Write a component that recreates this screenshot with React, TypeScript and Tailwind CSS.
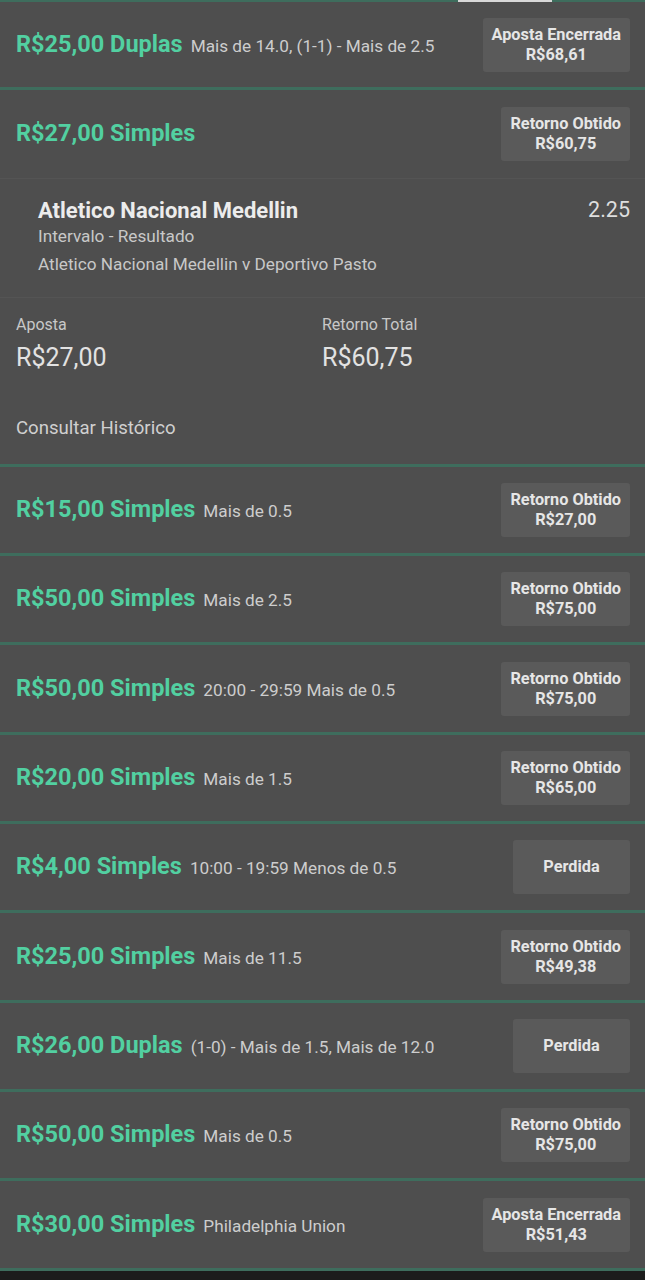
import React from "react";

type Row = { stake: string; type: string; desc?: string; label: string; value?: string };

const rows: Row[] = [
  { stake: "R$15,00", type: "Simples", desc: "Mais de 0.5", label: "Retorno Obtido", value: "R$27,00" },
  { stake: "R$50,00", type: "Simples", desc: "Mais de 2.5", label: "Retorno Obtido", value: "R$75,00" },
  { stake: "R$50,00", type: "Simples", desc: "20:00 - 29:59 Mais de 0.5", label: "Retorno Obtido", value: "R$75,00" },
  { stake: "R$20,00", type: "Simples", desc: "Mais de 1.5", label: "Retorno Obtido", value: "R$65,00" },
  { stake: "R$4,00", type: "Simples", desc: "10:00 - 19:59 Menos de 0.5", label: "Perdida" },
  { stake: "R$25,00", type: "Simples", desc: "Mais de 11.5", label: "Retorno Obtido", value: "R$49,38" },
  { stake: "R$26,00", type: "Duplas", desc: "(1-0) - Mais de 1.5, Mais de 12.0", label: "Perdida" },
  { stake: "R$50,00", type: "Simples", desc: "Mais de 0.5", label: "Retorno Obtido", value: "R$75,00" },
  { stake: "R$30,00", type: "Simples", desc: "Philadelphia Union", label: "Aposta Encerrada", value: "R$51,43" },
];

function Badge({ label, value }: { label: string; value?: string }) {
  return (
    <div className="min-w-[117px] h-[54px] px-[9px] rounded-[3px] bg-[#5a5a5a] flex flex-col items-center justify-center text-[#e6e6e6] font-bold text-[16.3px] leading-[20px] shrink-0">
      <span>{label}</span>
      {value && <span>{value}</span>}
    </div>
  );
}

function Header({ r, h = "h-[86px]" }: { r: Row; h?: string }) {
  return (
    <div className={`${h} flex items-center justify-between pl-4 pr-[15px]`}>
      <div className="flex items-baseline gap-[8px] min-w-0">
        <span className="text-[#52d0a1] font-bold text-[23.5px] whitespace-nowrap">
          {r.stake} {r.type}
        </span>
        {r.desc && <span className="text-[#cdcdcd] text-[17.2px] whitespace-nowrap">{r.desc}</span>}
      </div>
      <Badge label={r.label} value={r.value} />
    </div>
  );
}

const Line = () => <div className="h-[3px] bg-[#3e6d5d]" />;

export default function App() {
  return (
    <div className="w-[645px] h-[1280px] bg-[#1c1c1c] overflow-hidden" style={{ fontFamily: "Roboto, 'Noto Sans', sans-serif" }}>
      <div className="bg-[#4e4e4e]">
        <div className="h-[2px] bg-[#3e6d5d] flex">
          <div className="ml-[458px] w-[94px] h-full bg-[#d8d8d8]" />
        </div>
        <Header
          r={{ stake: "R$25,00", type: "Duplas", desc: "Mais de 14.0, (1-1) - Mais de 2.5", label: "Aposta Encerrada", value: "R$68,61" }}
          h="h-[85px]"
        />
        <Line />
        <div className="h-[88px] flex items-center justify-between pl-4 pr-[15px]">
          <span className="text-[#52d0a1] font-bold text-[23.5px]">R$27,00 Simples</span>
          <Badge label="Retorno Obtido" value="R$60,75" />
        </div>
        <div className="h-px bg-[#545454]" />
        <div className="pl-[38px] pr-[15px] pt-[19px] pb-[18px]">
          <div className="flex justify-between items-center h-[24px]">
            <span className="text-[#ececec] font-bold text-[22px]">Atletico Nacional Medellin</span>
            <span className="text-[#dedede] text-[21.5px]">2.25</span>
          </div>
          <div className="mt-px h-[28px] flex items-center text-[#c8c8c8] text-[17.2px]">Intervalo - Resultado</div>
          <div className="h-[28px] flex items-center text-[#c8c8c8] text-[17.2px]">Atletico Nacional Medellin v Deportivo Pasto</div>
        </div>
        <div className="h-px bg-[#545454]" />
        <div className="pl-4 pt-[17px] pb-[23px]">
          <div className="flex">
            <div className="w-[306px]">
              <div className="h-[20px] flex items-center text-[#c8c8c8] text-[16px]">Aposta</div>
              <div className="mt-[8px] h-[30px] flex items-center text-[#e2e2e2] text-[25px]">R$27,00</div>
            </div>
            <div>
              <div className="h-[20px] flex items-center text-[#c8c8c8] text-[16px]">Retorno Total</div>
              <div className="mt-[8px] h-[30px] flex items-center text-[#e2e2e2] text-[25px]">R$60,75</div>
            </div>
          </div>
          <div className="mt-[44px] h-[24px] flex items-center text-[#d0d0d0] text-[18.6px]">Consultar Histórico</div>
        </div>
        <Line />
        {rows.map((r, i) => (
          <div key={i}>
            <Header r={r} h={i % 3 === 2 ? "h-[87px]" : "h-[86px]"} />
            <Line />
          </div>
        ))}
      </div>
    </div>
  );
}
